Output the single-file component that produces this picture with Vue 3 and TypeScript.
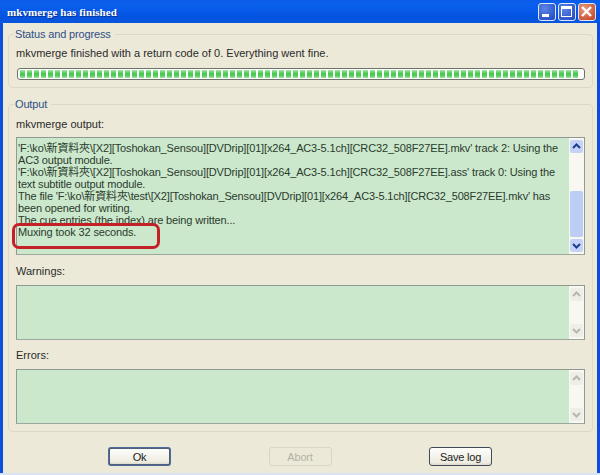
<script setup lang="ts">
const outputLines: string[] = [
  "'F:\\ko\\新資料夾\\[X2][Toshokan_Sensou][DVDrip][01][x264_AC3-5.1ch][CRC32_508F27EE].mkv' track 2: Using the",
  'AC3 output module.',
  "'F:\\ko\\新資料夾\\[X2][Toshokan_Sensou][DVDrip][01][x264_AC3-5.1ch][CRC32_508F27EE].ass' track 0: Using the",
  'text subtitle output module.',
  "The file 'F:\\ko\\新資料夾\\test\\[X2][Toshokan_Sensou][DVDrip][01][x264_AC3-5.1ch][CRC32_508F27EE].mkv' has",
  'been opened for writing.',
  'The cue entries (the index) are being written...',
  'Muxing took 32 seconds.',
]
const segments: number[] = Array.from({ length: 80 }, (_, i) => i)
</script>

<template>
  <div class="window">
    <header class="titlebar">
      <span class="title">mkvmerge has finished</span>
      <div class="controls">
        <span class="ctl blue">
          <svg width="18" height="18" viewBox="0 0 18 18"><rect x="4" y="11" width="7" height="3" fill="#fff" /></svg>
        </span>
        <span class="ctl blue">
          <svg width="18" height="18" viewBox="0 0 18 18"><path d="M3 3h11v11H3z M4 6v7h9V6z" fill="#fff" fill-rule="evenodd" /></svg>
        </span>
        <span class="ctl red">
          <svg width="18" height="18" viewBox="0 0 18 18"><path d="M4 4l9 9M13 4l-9 9" stroke="#fff" stroke-width="2.4" /></svg>
        </span>
      </div>
    </header>

    <main class="body">
      <fieldset class="group status">
        <legend>Status and progress</legend>
        <p class="label">mkvmerge finished with a return code of 0. Everything went fine.</p>
        <div class="progress">
          <i v-for="s in segments" :key="s" class="seg"></i>
        </div>
      </fieldset>

      <fieldset class="group output">
        <legend>Output</legend>
        <p class="label">mkvmerge output:</p>
        <div class="box main-box">
          <div class="log">
            <div v-for="(line, i) in outputLines" :key="i" class="line">{{ line }}</div>
            <div class="highlight"></div>
          </div>
          <div class="scroll">
            <span class="arrow">
              <svg width="11" height="11" viewBox="0 0 11 11"><path d="M2 7l3.5-3.5L9 7" fill="none" stroke="#1d3f8c" stroke-width="2" /></svg>
            </span>
            <div class="track"><div class="thumb"></div></div>
            <span class="arrow">
              <svg width="11" height="11" viewBox="0 0 11 11"><path d="M2 4l3.5 3.5L9 4" fill="none" stroke="#1d3f8c" stroke-width="2" /></svg>
            </span>
          </div>
        </div>

        <p class="label warn">Warnings:</p>
        <div class="box small-box">
          <div class="log"></div>
          <div class="scroll off">
            <span class="arrow">
              <svg width="11" height="11" viewBox="0 0 11 11"><path d="M2 7l3.5-3.5L9 7" fill="none" stroke="#b4b8ae" stroke-width="2" /></svg>
            </span>
            <div class="track"></div>
            <span class="arrow">
              <svg width="11" height="11" viewBox="0 0 11 11"><path d="M2 4l3.5 3.5L9 4" fill="none" stroke="#b4b8ae" stroke-width="2" /></svg>
            </span>
          </div>
        </div>

        <p class="label err">Errors:</p>
        <div class="box small-box">
          <div class="log"></div>
          <div class="scroll off">
            <span class="arrow">
              <svg width="11" height="11" viewBox="0 0 11 11"><path d="M2 7l3.5-3.5L9 7" fill="none" stroke="#b4b8ae" stroke-width="2" /></svg>
            </span>
            <div class="track"></div>
            <span class="arrow">
              <svg width="11" height="11" viewBox="0 0 11 11"><path d="M2 4l3.5 3.5L9 4" fill="none" stroke="#b4b8ae" stroke-width="2" /></svg>
            </span>
          </div>
        </div>
      </fieldset>

      <div class="buttons">
        <button class="btn default">Ok</button>
        <button class="btn disabled" disabled>Abort</button>
        <button class="btn">Save log</button>
      </div>
    </main>
  </div>
</template>

<style>
html,
body {
  margin: 0;
  background: #ece9d8;
}
</style>

<style scoped>
.window {
  width: 600px;
  height: 475px;
  box-sizing: border-box;
  display: flex;
  flex-direction: column;
  overflow: hidden;
  font-family: 'Liberation Sans', 'Noto Sans CJK TC', Arial, sans-serif;
  font-size: 11px;
  color: #2b2b2b;
  background: #0a4fdc;
  border-bottom: 2px solid #d8e4f4;
}
.titlebar {
  height: 23px;
  flex: none;
  display: flex;
  align-items: center;
  justify-content: space-between;
  padding: 0 4px 0 7px;
  background: linear-gradient(#0a5be8 0, #0b60ee 20%, #0453e2 70%, #0a55dd 100%);
}
.title {
  font-family: 'Liberation Serif', serif;
  font-weight: 700;
  font-size: 11px;
  color: #fff;
  letter-spacing: 0.05px;
  text-shadow: 1px 1px 0 #0a2f90;
}
.controls {
  display: flex;
  gap: 2px;
}
.ctl {
  width: 18px;
  height: 18px;
  box-sizing: border-box;
  border: 1px solid #dfe8f8;
  border-radius: 3px;
  display: flex;
  align-items: center;
  justify-content: center;
  overflow: hidden;
}
.ctl svg {
  flex: none;
}
.blue {
  background: radial-gradient(circle at 35% 30%, #5c86e6, #2a50c8 80%);
}
.red {
  background: radial-gradient(circle at 35% 30%, #e89a80, #c8502e 80%);
}
.body {
  flex: 1;
  min-height: 0;
  margin: 0 3px;
  padding: 5px 4px 0 5px;
  background: #ece9d8;
  display: flex;
  flex-direction: column;
}
.group {
  margin: 0;
  padding: 0 4px 0 7px;
  border: 1px solid #dcd9c6;
  border-radius: 4px;
  min-width: 0;
}
.group legend {
  padding: 0 4px 0 1px;
  margin-left: -2px;
  color: #2f4f86;
  font-size: 11px;
  letter-spacing: -0.15px;
  line-height: 12px;
}
.status {
  height: 60px;
  box-sizing: border-box;
}
.output {
  height: 334px;
  box-sizing: border-box;
  margin-top: 10px;
}
.label {
  margin: 0;
  font-size: 11px;
  line-height: 13px;
  padding-top: 7px;
}
.output .label {
  padding-top: 8px;
}
.output .warn {
  padding-top: 10px;
}
.output .err {
  padding-top: 9px;
}
.progress {
  margin: 8px 0 0 1px;
  height: 12px;
  box-sizing: border-box;
  width: 568px;
  border: 1px solid #6f7468;
  border-radius: 3px;
  background: #fff;
  padding: 1px 2px;
  display: flex;
  gap: 2px;
  overflow: hidden;
}
.seg {
  flex: none;
  width: 5px;
  height: 8px;
  background: linear-gradient(#a6e6a6, #46c84e 45%, #52cc5a 70%, #a0e4a2);
}
.box {
  margin-top: 6px;
  width: 569px;
  box-sizing: border-box;
  border: 1px solid #8f9a94;
  border-bottom-color: #9ca89e;
  background: #cce8cc;
  display: flex;
}
.main-box {
  height: 118px;
}
.small-box {
  height: 55px;
  margin-top: 7px;
}
.log {
  position: relative;
  flex: 1;
  min-width: 0;
  padding: 4px 0 0 1px;
  font-size: 11px;
  letter-spacing: -0.15px;
  line-height: 12px;
  color: #2a3a2c;
}
.line {
  white-space: nowrap;
}
.highlight {
  position: absolute;
  left: -5px;
  top: 85px;
  width: 148px;
  height: 26px;
  box-sizing: border-box;
  border: 3px solid #c42028;
  border-radius: 7px;
}
.scroll {
  flex: none;
  width: 15px;
  box-sizing: border-box;
  padding: 2px 1px;
  display: flex;
  flex-direction: column;
  background: #f8f7f2;
}
.arrow {
  width: 13px;
  height: 13px;
  flex: none;
  border-radius: 2px;
  display: flex;
  align-items: center;
  justify-content: center;
  background: #c4d2f8;
}
.off .arrow {
  background: #efeee6;
}
.track {
  flex: 1;
  min-height: 0;
  display: flex;
  flex-direction: column;
  justify-content: flex-end;
  padding-bottom: 2px;
}
.thumb {
  height: 46px;
  background: #bccdf6;
  border-radius: 2px;
}
.buttons {
  display: flex;
  justify-content: space-between;
  padding: 15px 101px 0 100px;
}
.btn {
  width: 63px;
  height: 19px;
  padding: 0;
  box-sizing: border-box;
  font-family: 'Liberation Sans', Arial, sans-serif;
  font-size: 11px;
  letter-spacing: -0.2px;
  color: #222;
  border: 1px solid #3f4a5a;
  border-radius: 3px;
  background: linear-gradient(#fdfdfa, #eeece2 85%, #dcd8c8);
}
.default {
  border: 2px solid #4d6a9a;
  outline: 1px dotted #555;
  outline-offset: -2px;
}
.disabled {
  color: #b4b2a4;
  border-color: #d8d6c6;
  background: #ece9d8;
}
</style>
